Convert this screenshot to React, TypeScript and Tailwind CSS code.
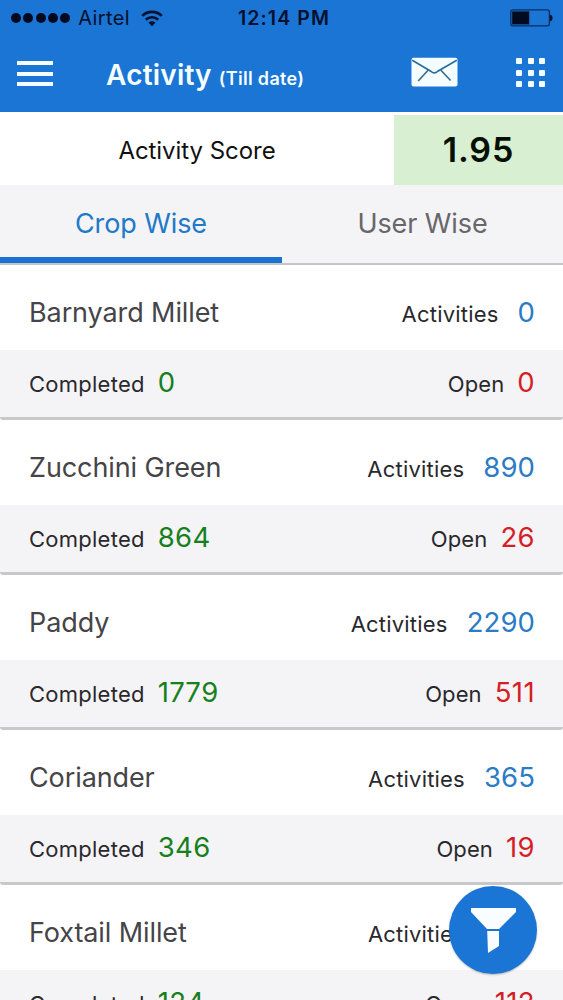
type Crop = {
  name: string;
  activities: number;
  completed: number;
  open: number;
};

const crops: Crop[] = [
  { name: "Barnyard Millet", activities: 0, completed: 0, open: 0 },
  { name: "Zucchini Green", activities: 890, completed: 864, open: 26 },
  { name: "Paddy", activities: 2290, completed: 1779, open: 511 },
  { name: "Coriander", activities: 365, completed: 346, open: 19 },
  { name: "Foxtail Millet", activities: 236, completed: 124, open: 112 },
];

function StatusBar() {
  return (
    <div className="grid h-9 grid-cols-[1fr_auto_1fr] items-center pl-[11px] pr-[10px] text-[#04102c]">
      <div className="flex items-center">
        <div className="flex gap-[2.3px]">
          {[0, 1, 2, 3, 4].map((dot) => (
            <span key={dot} className="size-[10px] rounded-full bg-[#020a20]" />
          ))}
        </div>
        <span className="ml-2 text-[20px] leading-6 tracking-[0.4px]">Airtel</span>
        <svg className="ml-[11px] h-[17px] w-[22px]" viewBox="0 0 22 17" fill="none" stroke="currentColor" strokeWidth="2.6">
          <path d="M1.2 5.9a14 14 0 0 1 19.6 0" />
          <path d="M4.8 9.8a9 9 0 0 1 12.4 0" />
          <path d="M7.4 12.6a5.2 5.2 0 0 1 7.2 0L11 16.2Z" fill="currentColor" stroke="none" />
        </svg>
      </div>
      <span className="ml-1 text-[19.5px] font-semibold leading-6 tracking-[1.1px]">12:14 PM</span>
      <svg className="h-[18px] w-[43px] justify-self-end" viewBox="0 0 43 18" fill="none">
        <rect x="0.8" y="0.8" width="38.6" height="16" rx="2" stroke="#0a2c60" strokeWidth="1.3" />
        <rect x="2.2" y="2.4" width="17" height="13" fill="#020a20" />
        <path d="M40 6h1.2q1.4 1 1.4 3t-1.4 3H40Z" fill="#04102c" />
      </svg>
    </div>
  );
}

function Header() {
  return (
    <header className="h-28 bg-[#1a75d5]">
      <StatusBar />
      <div className="flex h-[76px] items-start px-[17px] text-[#f4fdff]">
        <div className="mt-[25px] flex w-9 flex-col gap-[6.5px]">
          <span className="h-1 bg-current" />
          <span className="h-1 bg-current" />
          <span className="h-1 bg-current" />
        </div>
        <h1 className="ml-[53px] mt-[23px] flex items-baseline whitespace-nowrap leading-8">
          <span className="text-[28px] font-semibold tracking-[0.2px]">Activity</span>
          <span className="ml-[7px] text-[18px] font-semibold tracking-[0.3px]">(Till date)</span>
        </h1>
        <svg className="ml-auto mt-[21px] h-[30px] w-[47px]" viewBox="0 0 47 30" fill="none">
          <rect x="0.5" y="0.8" width="46" height="28.7" rx="2" fill="currentColor" />
          <path
            d="M1.2 3.2 19.8 14.2C22 16.4 24.6 16.4 26.8 14.2L45.8 3.2"
            stroke="#2a6d9e"
            strokeWidth="1.6"
          />
          <path d="M17.3 13 7.2 24M29.7 13 39.6 23.5" stroke="#3c6f90" strokeWidth="1.7" />
        </svg>
        <div className="ml-[58px] mr-px mt-[22px] grid grid-cols-3 gap-[5.5px]">
          {[0, 1, 2, 3, 4, 5, 6, 7, 8].map((cell) => (
            <span key={cell} className="size-[6px] rounded-[1px] bg-current" />
          ))}
        </div>
      </div>
    </header>
  );
}

function ScoreRow() {
  return (
    <div className="flex h-[73px] bg-white">
      <div className="w-[394px] pt-[23px] text-center text-[24px] leading-8 tracking-[-0.05px] text-[#111]">
        Activity Score
      </div>
      <div className="mt-[3px] flex-1 bg-[#d9efd2] pt-[17px] text-center text-[34px] font-semibold leading-9 tracking-[0.9px] text-[#050f05]">
        1.95
      </div>
    </div>
  );
}

function Tabs() {
  return (
    <div className="flex h-20 border-b-2 border-[#c5c4c8] bg-[#f4f3f6] text-center text-[27px] leading-8">
      <div className="h-[78px] w-[282px] border-b-[6px] border-[#1a70d3] pt-[23px] tracking-[-0.1px] text-[#2079c9]">
        Crop Wise
      </div>
      <div className="flex-1 pt-[23px] tracking-[-0.1px] text-[#67666a]">User Wise</div>
    </div>
  );
}

function CropCard({ crop }: { crop: Crop }) {
  return (
    <article className="h-[155px] shrink-0 overflow-hidden rounded-[3px] border-b-[3px] border-[#c8c7ca]">
      <div className="flex h-[85px] items-baseline bg-white pl-[29px] pr-7 pt-[31px] leading-8">
        <h2 className="text-[27px] tracking-[-0.1px] text-[#454448]">{crop.name}</h2>
        <span className="ml-auto text-[22px] tracking-[0.2px] text-[#29282c]">Activities</span>
        <span className="ml-[19px] text-[27.5px] tracking-[0.1px] text-[#2b7bc5] [font-kerning:none]">
          {crop.activities}
        </span>
      </div>
      <div className="flex h-[67px] items-baseline bg-[#f4f3f6] pl-[29px] pr-7 pt-4 leading-8">
        <span className="text-[22px] tracking-[0.25px] text-[#29282c]">Completed</span>
        <span className="ml-[13px] text-[27.5px] tracking-[0.4px] text-[#16801c] [font-kerning:none]">
          {crop.completed}
        </span>
        <span className="ml-auto text-[22px] tracking-[0.1px] text-[#29282c]">Open</span>
        <span className="ml-[13px] text-[27.5px] tracking-[0.4px] text-[#d51f26] [font-kerning:none]">
          {crop.open}
        </span>
      </div>
    </article>
  );
}

export default function App() {
  return (
    <div className="relative flex h-[1000px] w-[563px] flex-col overflow-hidden bg-white font-['Inter',sans-serif]">
      <Header />
      <ScoreRow />
      <Tabs />
      <main className="flex min-h-0 flex-1 flex-col overflow-hidden">
        {crops.map((crop) => (
          <CropCard key={crop.name} crop={crop} />
        ))}
      </main>
      <button
        aria-label="Filter"
        className="absolute bottom-[26px] right-[26px] size-[88px] rounded-full bg-[#1a75d5] shadow-[0_1px_2px_rgba(0,0,0,0.25)]"
      >
        <svg className="size-full" viewBox="0 0 88 88" fill="#fafdff">
          <path d="M22 22H67V26L50 43H38L22 26Z" />
          <path d="M38.2 45H50V60L39 67Z" />
        </svg>
      </button>
    </div>
  );
}
